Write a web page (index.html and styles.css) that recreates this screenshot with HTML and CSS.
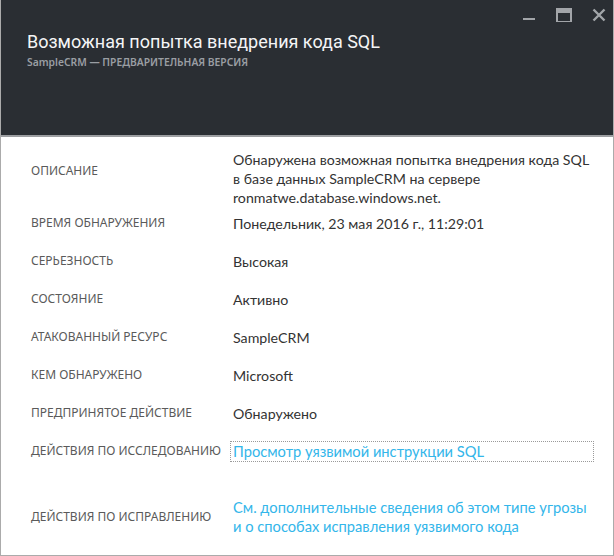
FILE: index.html
```html
<!DOCTYPE html>
<html lang="ru">
<head>
<meta charset="utf-8">
<link rel="stylesheet" href="styles.css">
</head>
<body>
<div class="panel">
  <header class="head">
    <div class="controls">
      <svg class="ctl" width="14" height="14" viewBox="0 0 14 14"><rect x="1" y="10" width="12" height="2" fill="currentColor"/></svg>
      <svg class="ctl" width="16" height="14" viewBox="0 0 16 14"><rect x="1" y="1" width="14" height="13" fill="none" stroke="currentColor" stroke-width="2"/><rect x="1" y="1" width="14" height="4" fill="currentColor"/></svg>
      <svg class="ctl" width="14" height="14" viewBox="0 0 14 14"><path d="M1.5 1.5 L12.5 12.5 M12.5 1.5 L1.5 12.5" stroke="currentColor" stroke-width="2.4" fill="none"/></svg>
    </div>
    <h1 class="title">Возможная попытка внедрения кода SQL</h1>
    <div class="subtitle">SampleCRM — ПРЕДВАРИТЕЛЬНАЯ ВЕРСИЯ</div>
  </header>
  <div class="body">
    <div class="row row-desc">
      <div class="label">ОПИСАНИЕ</div>
      <div class="value">Обнаружена возможная попытка внедрения кода SQL в базе данных SampleCRM на сервере ronmatwe.database.windows.net.</div>
    </div>
    <div class="row">
      <div class="label">ВРЕМЯ ОБНАРУЖЕНИЯ</div>
      <div class="value">Понедельник, 23 мая 2016 г., 11:29:01</div>
    </div>
    <div class="row">
      <div class="label">СЕРЬЕЗНОСТЬ</div>
      <div class="value">Высокая</div>
    </div>
    <div class="row">
      <div class="label">СОСТОЯНИЕ</div>
      <div class="value">Активно</div>
    </div>
    <div class="row">
      <div class="label">АТАКОВАННЫЙ РЕСУРС</div>
      <div class="value">SampleCRM</div>
    </div>
    <div class="row">
      <div class="label">КЕМ ОБНАРУЖЕНО</div>
      <div class="value">Microsoft</div>
    </div>
    <div class="row">
      <div class="label">ПРЕДПРИНЯТОЕ ДЕЙСТВИЕ</div>
      <div class="value">Обнаружено</div>
    </div>
    <div class="row">
      <div class="label">ДЕЙСТВИЯ ПО ИССЛЕДОВАНИЮ</div>
      <div class="value"><a class="link link-focus" href="#">Просмотр уязвимой инструкции SQL</a></div>
    </div>
    <div class="row row-fix">
      <div class="label">ДЕЙСТВИЯ ПО ИСПРАВЛЕНИЮ</div>
      <div class="value"><a class="link" href="#">См. дополнительные сведения об этом типе угрозы и о способах исправления уязвимого кода</a></div>
    </div>
  </div>
</div>
</body>
</html>
```
FILE: styles.css
```css
html, body {
  margin: 0;
  padding: 0;
  background: #fff;
}
body {
  font-family: "Noto Sans", "Open Sans", sans-serif;
}
.panel {
  width: 614px;
  height: 556px;
  box-sizing: border-box;
  border: 1px solid #ababab;
  border-top: 0;
  display: flex;
  flex-direction: column;
  overflow: hidden;
}
.head {
  position: relative;
  background: #2a2e33;
  height: 137px;
  box-sizing: border-box;
  padding: 29px 0 0 26px;
  border-bottom: 2px solid #9c9ea1;
  flex: none;
}
.controls {
  position: absolute;
  top: 8px;
  right: 7px;
  display: flex;
  gap: 20px;
  color: #a2a5a9;
  align-items: flex-start;
}
.ctl { display: block; }
.title {
  margin: 0;
  font-family: Roboto, "Noto Sans", sans-serif;
  font-weight: 400;
  font-size: 18px;
  line-height: 25px;
  color: #f4f5f6;
}
.subtitle {
  margin-top: 1px;
  font-size: 10.3px;
  line-height: 14px;
  font-weight: 600;
  color: #9a9ea3;
}
.body {
  padding: 13px 16px 0 30px;
}
.row {
  display: grid;
  grid-template-columns: 202px 1fr;
  align-items: center;
  height: 38px;
}
.label {
  font-size: 12px;
  color: #5a5a5a;
  line-height: 16px;
}
.value {
  font-family: Lato, "Noto Sans", sans-serif;
  font-size: 14.2px;
  line-height: 19px;
  color: #333;
}
.row-desc {
  height: 54px;
  align-items: start;
}
.row-desc .label {
  margin-top: 13px;
}
.row-fix {
  height: auto;
  padding-top: 28px;
}
.row-fix .value {
  padding-right: 4px;
}
.link {
  color: #33b6ea;
  text-decoration: none;
  font-size: 14.7px;
}
.link-focus {
  display: block;
  margin-left: -2px;
  padding: 0 2px;
  outline: 1px dotted #9a9a9a;
  outline-offset: 0;
  margin-right: 4px;
}
```
